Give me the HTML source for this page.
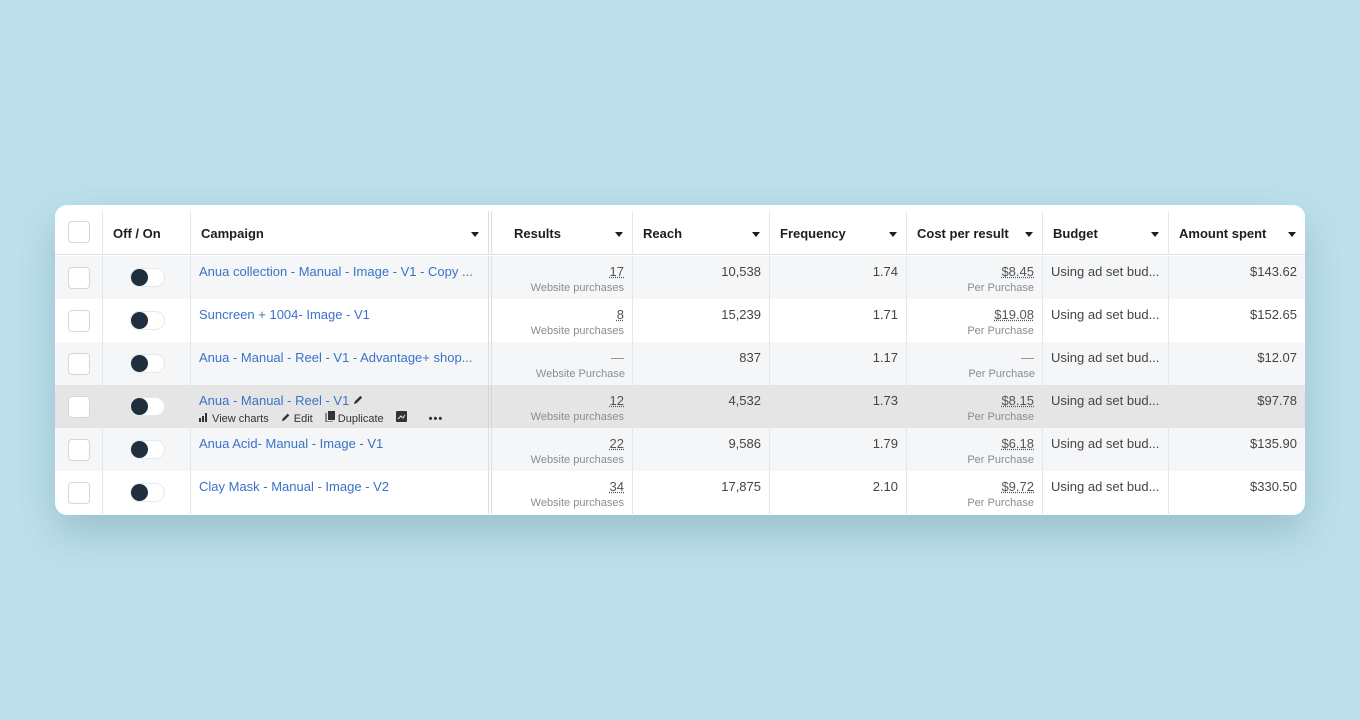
<!DOCTYPE html>
<html><head><meta charset="utf-8"><style>
*{box-sizing:border-box;margin:0;padding:0}
body{width:1360px;height:720px;background:#bde0eb;font-family:"Liberation Sans",sans-serif;position:relative;overflow:hidden}
.card{position:absolute;left:55px;top:205px;width:1250px;height:310px;background:#fff;border-radius:12px;overflow:hidden;box-shadow:0 18px 40px rgba(60,110,130,.28)}
.row{position:absolute;left:0;width:1250px;height:43px}
.c{position:absolute;top:0;height:100%;border-right:1px solid #e4e6ea}
.h .c{font-weight:bold;font-size:13px;color:#1c1e21;padding:15px 0 0 10px}
.h{top:6px;height:44px;background:#fff;border-bottom:1px solid #e0e2e6}
.arr{position:absolute;right:9px;top:21px;width:0;height:0;border-left:4px solid transparent;border-right:4px solid transparent;border-top:5px solid #1c1e21}
.cb{position:absolute;left:13px;top:11px;width:22px;height:22px;border:1px solid #d4d6da;border-radius:4px;background:#fff}
.tg{position:absolute;left:27px;top:12px;width:35px;height:19px;border-radius:10px;background:#fff;border:1px solid #e6e8eb}
.tg:before{content:"";position:absolute;left:0;top:0;width:17px;height:17px;border-radius:50%;background:#1f2f3d}
.lnk{color:#3a72c8;font-size:13px;position:absolute;left:8px;top:8px;white-space:nowrap}
.num{position:absolute;right:8px;top:8px;font-size:13px;color:#444;text-align:right}
.sub{position:absolute;right:8px;top:26px;font-size:11px;color:#8a8d91;white-space:nowrap}
.u{text-decoration:underline dotted;color:#555}
.txt{position:absolute;left:8px;top:8px;font-size:13px;color:#444;white-space:nowrap}
.tools{position:absolute;left:8px;top:26px;font-size:11px;color:#333;white-space:nowrap}
.tools span{margin-right:12px}
</style></head><body>
<div class="card">
<div class="row h">
 <div class="c" style="left:0;width:48px"><div class="cb" style="top:10px"></div></div>
 <div class="c" style="left:48px;width:88px;padding-left:10px">Off / On</div>
 <div class="c" style="left:136px;width:301px;border-right:4px double #dcdee2">Campaign<i class="arr"></i></div>
 <div class="c" style="left:441px;width:137px;padding-left:18px">Results<i class="arr"></i></div>
 <div class="c" style="left:578px;width:137px">Reach<i class="arr"></i></div>
 <div class="c" style="left:715px;width:137px">Frequency<i class="arr"></i></div>
 <div class="c" style="left:852px;width:136px">Cost per result<i class="arr"></i></div>
 <div class="c" style="left:988px;width:126px">Budget<i class="arr"></i></div>
 <div class="c" style="left:1114px;width:136px;border:0">Amount spent<i class="arr"></i></div>
</div>
</div>
<div style="position:absolute;left:55px;top:256px;width:1250px;height:258px;border-bottom-left-radius:12px;border-bottom-right-radius:12px;overflow:hidden">
<div class="row" style="top:0;background:#f4f6f8">
 <div class="c" style="left:0;width:48px"><div class="cb"></div></div>
 <div class="c" style="left:48px;width:88px"><div class="tg"></div></div>
 <div class="c" style="left:136px;width:301px;border-right:4px double #dcdee2"><div class="lnk">Anua collection - Manual - Image - V1 - Copy ...</div></div>
 <div class="c" style="left:441px;width:137px"><div class="num u">17</div><div class="sub">Website purchases</div></div>
 <div class="c" style="left:578px;width:137px"><div class="num">10,538</div></div>
 <div class="c" style="left:715px;width:137px"><div class="num">1.74</div></div>
 <div class="c" style="left:852px;width:136px"><div class="num u">$8.45</div><div class="sub">Per Purchase</div></div>
 <div class="c" style="left:988px;width:126px"><div class="txt">Using ad set bud...</div></div>
 <div class="c" style="left:1114px;width:136px;border:0"><div class="num">$143.62</div></div>
</div>
<div class="row" style="top:43px;background:#fff">
 <div class="c" style="left:0;width:48px"><div class="cb"></div></div>
 <div class="c" style="left:48px;width:88px"><div class="tg"></div></div>
 <div class="c" style="left:136px;width:301px;border-right:4px double #dcdee2"><div class="lnk">Suncreen + 1004- Image - V1</div></div>
 <div class="c" style="left:441px;width:137px"><div class="num u">8</div><div class="sub">Website purchases</div></div>
 <div class="c" style="left:578px;width:137px"><div class="num">15,239</div></div>
 <div class="c" style="left:715px;width:137px"><div class="num">1.71</div></div>
 <div class="c" style="left:852px;width:136px"><div class="num u">$19.08</div><div class="sub">Per Purchase</div></div>
 <div class="c" style="left:988px;width:126px"><div class="txt">Using ad set bud...</div></div>
 <div class="c" style="left:1114px;width:136px;border:0"><div class="num">$152.65</div></div>
</div>
<div class="row" style="top:86px;background:#f4f6f8">
 <div class="c" style="left:0;width:48px"><div class="cb"></div></div>
 <div class="c" style="left:48px;width:88px"><div class="tg"></div></div>
 <div class="c" style="left:136px;width:301px;border-right:4px double #dcdee2"><div class="lnk">Anua - Manual - Reel - V1 - Advantage+ shop...</div></div>
 <div class="c" style="left:441px;width:137px"><div class="num" style="color:#888">—</div><div class="sub" style="right:7px">Website Purchase</div></div>
 <div class="c" style="left:578px;width:137px"><div class="num">837</div></div>
 <div class="c" style="left:715px;width:137px"><div class="num">1.17</div></div>
 <div class="c" style="left:852px;width:136px"><div class="num" style="color:#888">—</div><div class="sub" style="right:7px">Per Purchase</div></div>
 <div class="c" style="left:988px;width:126px"><div class="txt">Using ad set bud...</div></div>
 <div class="c" style="left:1114px;width:136px;border:0"><div class="num">$12.07</div></div>
</div>
<div class="row" style="top:129px;background:#e5e5e5">
 <div class="c" style="left:0;width:48px"><div class="cb"></div></div>
 <div class="c" style="left:48px;width:88px"><div class="tg"></div></div>
 <div class="c" style="left:136px;width:301px;border-right:4px double #d4d4d4"><div class="lnk">Anua - Manual - Reel - V1 <svg width="11" height="11" viewBox="0 0 12 12"><path d="M1 11l1-3 6-6 2 2-6 6z" fill="#333"/></svg></div>
  <div class="tools"><span><svg width="10" height="9" viewBox="0 0 10 9"><rect x="0" y="5" width="2" height="4" fill="#333"/><rect x="3" y="3" width="2" height="6" fill="#333"/><rect x="6" y="0" width="2" height="9" fill="#333"/></svg> View charts</span><span><svg width="10" height="10" viewBox="0 0 12 12"><path d="M1 11l1-3 6-6 2 2-6 6z" fill="#333"/></svg> Edit</span><span><svg width="10" height="11" viewBox="0 0 10 11"><rect x="3" y="0" width="7" height="9" fill="#333"/><path d="M1 2v9h7" stroke="#333" fill="none"/></svg> Duplicate</span><span style="margin-right:22px"><svg width="11" height="11" viewBox="0 0 11 11"><rect width="11" height="11" rx="1" fill="#333"/><path d="M2 8l3-3 2 2 2-3" stroke="#e5e5e5" fill="none"/></svg></span><span style="font-weight:bold;letter-spacing:1px">•••</span></div></div>
 <div class="c" style="left:441px;width:137px"><div class="num u">12</div><div class="sub">Website purchases</div></div>
 <div class="c" style="left:578px;width:137px"><div class="num">4,532</div></div>
 <div class="c" style="left:715px;width:137px"><div class="num">1.73</div></div>
 <div class="c" style="left:852px;width:136px"><div class="num u">$8.15</div><div class="sub">Per Purchase</div></div>
 <div class="c" style="left:988px;width:126px"><div class="txt">Using ad set bud...</div></div>
 <div class="c" style="left:1114px;width:136px;border:0"><div class="num">$97.78</div></div>
</div>
<div class="row" style="top:172px;background:#f4f6f8">
 <div class="c" style="left:0;width:48px"><div class="cb"></div></div>
 <div class="c" style="left:48px;width:88px"><div class="tg"></div></div>
 <div class="c" style="left:136px;width:301px;border-right:4px double #dcdee2"><div class="lnk">Anua Acid- Manual - Image - V1</div></div>
 <div class="c" style="left:441px;width:137px"><div class="num u">22</div><div class="sub">Website purchases</div></div>
 <div class="c" style="left:578px;width:137px"><div class="num">9,586</div></div>
 <div class="c" style="left:715px;width:137px"><div class="num">1.79</div></div>
 <div class="c" style="left:852px;width:136px"><div class="num u">$6.18</div><div class="sub">Per Purchase</div></div>
 <div class="c" style="left:988px;width:126px"><div class="txt">Using ad set bud...</div></div>
 <div class="c" style="left:1114px;width:136px;border:0"><div class="num">$135.90</div></div>
</div>
<div class="row" style="top:215px;background:#fff">
 <div class="c" style="left:0;width:48px"><div class="cb"></div></div>
 <div class="c" style="left:48px;width:88px"><div class="tg"></div></div>
 <div class="c" style="left:136px;width:301px;border-right:4px double #dcdee2"><div class="lnk">Clay Mask - Manual - Image - V2</div></div>
 <div class="c" style="left:441px;width:137px"><div class="num u">34</div><div class="sub">Website purchases</div></div>
 <div class="c" style="left:578px;width:137px"><div class="num">17,875</div></div>
 <div class="c" style="left:715px;width:137px"><div class="num">2.10</div></div>
 <div class="c" style="left:852px;width:136px"><div class="num u">$9.72</div><div class="sub">Per Purchase</div></div>
 <div class="c" style="left:988px;width:126px"><div class="txt">Using ad set bud...</div></div>
 <div class="c" style="left:1114px;width:136px;border:0"><div class="num">$330.50</div></div>
</div>
</div>
</body></html>
